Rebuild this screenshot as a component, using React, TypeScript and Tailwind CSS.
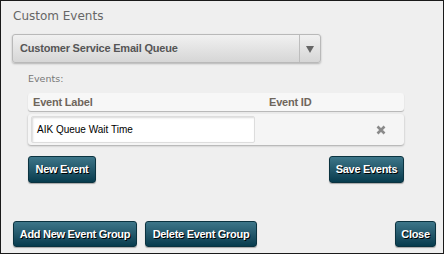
import React from "react";

const sansB = { fontFamily: "'Liberation Sans', Arial, sans-serif" };

const btn =
  "h-full whitespace-nowrap rounded-[3px] border border-[#0b3340] bg-gradient-to-b from-[#3d7689] to-[#073c4e] text-white font-bold text-[11px] tracking-[-0.3px] [text-shadow:1px_1px_0_#000] shadow-[0_1px_1px_rgba(0,0,0,0.3)] flex items-center justify-center";

export default function App() {
  return (
    <div
      className="w-[444px] h-[254px] border border-[#1a1a1a] bg-[#efefef] flex flex-col"
      style={{ fontFamily: "'DejaVu Sans', Verdana, sans-serif" }}
    >
      <div className="pl-[12px] pt-[7px] text-[12px] leading-[16px] text-[#666]">Custom Events</div>
      <div className="ml-[11px] mt-[10px] w-[309px] h-[29px] rounded-[3px] border border-[#b9b9b9] bg-gradient-to-b from-[#f1f1f1] to-[#d6d6d6] shadow-[0_1px_2px_rgba(0,0,0,0.25)] flex items-stretch">
        <div
          className="flex-1 flex items-center pl-[7px] text-[11px] font-bold text-[#555] tracking-[-0.2px] whitespace-nowrap"
          style={sansB}
        >
          Customer Service Email Queue
        </div>
        <div className="w-[21px] border-l border-[#bdbdbd] flex items-center justify-center">
          <svg width="8" height="8" viewBox="0 0 8 8">
            <path d="M0 1 H8 L4 8 Z" fill="#666" />
          </svg>
        </div>
      </div>
      <div className="pl-[27px] mt-[10px] text-[9.5px] leading-[12px] text-[#777]">Events:</div>
      <div className="ml-[27px] mt-[8px] w-[376px] flex flex-col">
        <div
          className="h-[18px] rounded-[3px] bg-[#f7f7f7] shadow-[0_1px_1px_rgba(0,0,0,0.25)] flex items-center text-[11px] font-bold text-[#6f665c] tracking-[-0.2px]"
          style={sansB}
        >
          <div className="w-[240px] pl-[5px]">Event Label</div>
          <div className="pl-[1px]">Event ID</div>
        </div>
        <div className="mt-[3px] h-[31px] rounded-[3px] bg-[#f5f5f5] shadow-[0_1px_2px_rgba(0,0,0,0.3)] flex items-center">
          <div
            className="ml-[3px] w-[224px] h-[27px] bg-white border border-[#ddd] rounded-[2px] shadow-[inset_1px_1px_2px_rgba(0,0,0,0.15)] flex items-center pl-[5px] text-[10px] text-black"
            style={sansB}
          >
            AIK Queue Wait Time
          </div>
          <div className="ml-[120px] w-[12px] h-[12px] flex items-center justify-center">
            <svg width="10" height="10" viewBox="0 0 10 10">
              <path d="M1.5 1.5 L8.5 8.5 M8.5 1.5 L1.5 8.5" stroke="#8a8a8a" strokeWidth="2.6" />
            </svg>
          </div>
        </div>
        <div className="mt-[11px] h-[27px] flex justify-between" style={sansB}>
          <div className={btn + " w-[68px]"}>New Event</div>
          <div className={btn + " w-[75px]"}>Save Events</div>
        </div>
      </div>
      <div className="mt-auto mb-[6px] mx-[12px] h-[26px] flex" style={sansB}>
        <div className={btn + " w-[124px]"}>Add New Event Group</div>
        <div className={btn + " w-[112px] ml-[8px]"}>Delete Event Group</div>
        <div className={btn + " w-[41px] ml-auto mr-[-5px]"}>Close</div>
      </div>
    </div>
  );
}
